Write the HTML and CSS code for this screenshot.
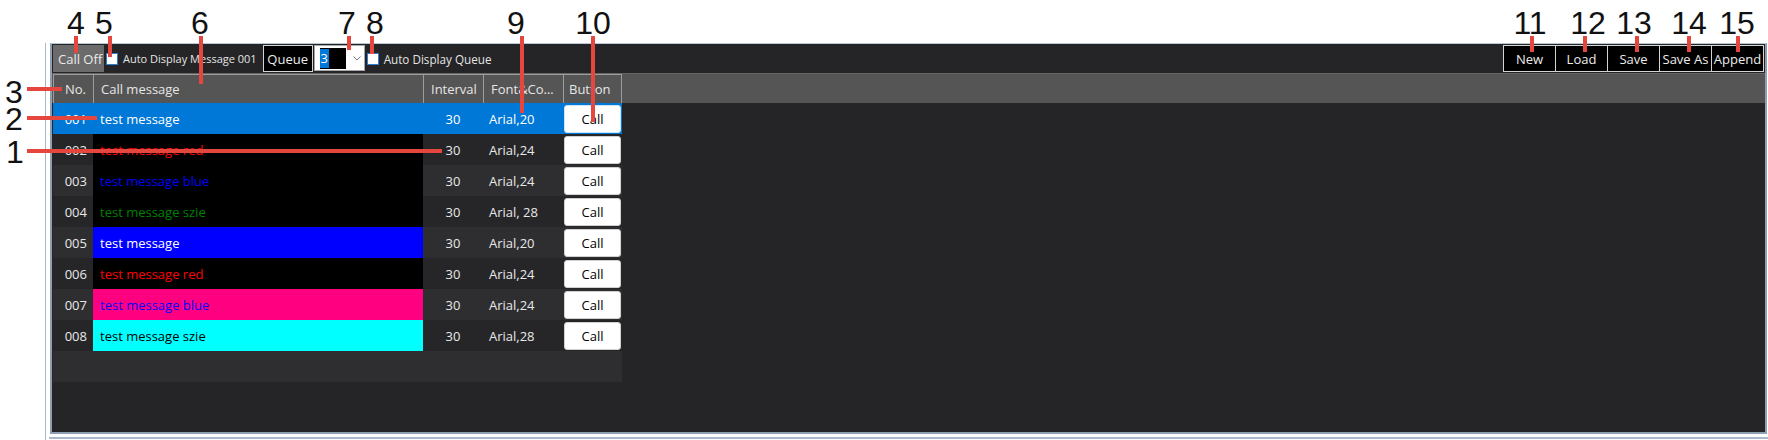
FILE: index.html
```html
<!DOCTYPE html>
<html>
<head>
<meta charset="utf-8">
<link rel="stylesheet" href="styles.css">
</head>
<body>
<div class="page">
  <div class="window">
    <div class="panel">
      <div class="toolbar">
        <div class="tb-left">
          <button class="btn-calloff">Call Off</button>
          <label class="chk chk-m"><span class="box"></span><span class="chk-text">Auto Display Message 001</span></label>
          <button class="btn-dark btn-queue">Queue</button>
          <div class="combo">
            <span class="combo-text"><span class="sel">3</span></span>
            <svg class="chev" width="8" height="5" viewBox="0 0 8 5"><path d="M0.5 0.5 L4 4 L7.5 0.5" fill="none" stroke="#777" stroke-width="1"/></svg>
          </div>
          <label class="chk chk-q"><span class="box"></span><span class="chk-text">Auto Display Queue</span></label>
        </div>
        <div class="tb-right">
          <button class="btn-dark btn-file">New</button>
          <button class="btn-dark btn-file">Load</button>
          <button class="btn-dark btn-file">Save</button>
          <button class="btn-dark btn-file">Save As</button>
          <button class="btn-dark btn-file">Append</button>
        </div>
      </div>
      <div class="header-bar">
        <div class="row head">
          <div class="hc c-no">No.</div>
          <div class="hc c-msg">Call message</div>
          <div class="hc c-int">Interval</div>
          <div class="hc c-font">Font&amp;Co…</div>
          <div class="hc c-btn hc-last">Button</div>
        </div>
      </div>
      <div class="tbody">
        <div class="row selected">
          <div class="c-no">001</div>
          <div class="c-msg">test message</div>
          <div class="c-int">30</div>
          <div class="c-font">Arial,20</div>
          <div class="c-btn"><button class="call">Call</button></div>
        </div>
        <div class="row even">
          <div class="c-no">002</div>
          <div class="c-msg m-black t-red">test message red</div>
          <div class="c-int">30</div>
          <div class="c-font">Arial,24</div>
          <div class="c-btn"><button class="call">Call</button></div>
        </div>
        <div class="row odd">
          <div class="c-no">003</div>
          <div class="c-msg m-black t-blue">test message blue</div>
          <div class="c-int">30</div>
          <div class="c-font">Arial,24</div>
          <div class="c-btn"><button class="call">Call</button></div>
        </div>
        <div class="row even">
          <div class="c-no">004</div>
          <div class="c-msg m-black t-green">test message szie</div>
          <div class="c-int">30</div>
          <div class="c-font">Arial, 28</div>
          <div class="c-btn"><button class="call">Call</button></div>
        </div>
        <div class="row odd">
          <div class="c-no">005</div>
          <div class="c-msg m-blue t-white">test message</div>
          <div class="c-int">30</div>
          <div class="c-font">Arial,20</div>
          <div class="c-btn"><button class="call">Call</button></div>
        </div>
        <div class="row even">
          <div class="c-no">006</div>
          <div class="c-msg m-black t-red">test message red</div>
          <div class="c-int">30</div>
          <div class="c-font">Arial,24</div>
          <div class="c-btn"><button class="call">Call</button></div>
        </div>
        <div class="row odd">
          <div class="c-no">007</div>
          <div class="c-msg m-pink t-blue">test message blue</div>
          <div class="c-int">30</div>
          <div class="c-font">Arial,24</div>
          <div class="c-btn"><button class="call">Call</button></div>
        </div>
        <div class="row even">
          <div class="c-no">008</div>
          <div class="c-msg m-cyan t-black">test message szie</div>
          <div class="c-int">30</div>
          <div class="c-font">Arial,28</div>
          <div class="c-btn"><button class="call">Call</button></div>
        </div>
        <div class="row odd empty"></div>
      </div>
    </div>
    <div class="bottom-line"></div>
  </div>

  <div class="ann-num n1">1</div>
  <div class="ann-num n2">2</div>
  <div class="ann-num n3">3</div>
  <div class="ann-num n4">4</div>
  <div class="ann-num n5">5</div>
  <div class="ann-num n6">6</div>
  <div class="ann-num n7">7</div>
  <div class="ann-num n8">8</div>
  <div class="ann-num n9">9</div>
  <div class="ann-num n10">10</div>
  <div class="ann-num n11">11</div>
  <div class="ann-num n12">12</div>
  <div class="ann-num n13">13</div>
  <div class="ann-num n14">14</div>
  <div class="ann-num n15">15</div>

  <div class="ann-line h l1"></div>
  <div class="ann-line h l2"></div>
  <div class="ann-line h l3"></div>
  <div class="ann-line v l4"></div>
  <div class="ann-line v l5"></div>
  <div class="ann-line v l6"></div>
  <div class="ann-line v l7"></div>
  <div class="ann-line v l8"></div>
  <div class="ann-line v l9"></div>
  <div class="ann-line v l10"></div>
  <div class="ann-line v l11"></div>
  <div class="ann-line v l12"></div>
  <div class="ann-line v l13"></div>
  <div class="ann-line v l14"></div>
  <div class="ann-line v l15"></div>
</div>
</body>
</html>
```

FILE: styles.css
```css
* { box-sizing: border-box; }
html, body { margin: 0; padding: 0; background: #ffffff; }
body { font-family: "Open Sans", "Noto Sans", sans-serif; font-size: 13px; }

.page {
  position: relative;
  width: 1768px;
  height: 440px;
  overflow: hidden;
  padding: 43px 0 0 45px;
}

.window {
  height: 397px;
  border-left: 1px solid #a9b7c8;
  padding-left: 4px;
}

.panel {
  height: 391px;
  margin-right: 1px;
  background: #252527;
  border-top: 1px solid #b9c6d5;
  border-left: 2px solid #8e9fb4;
  border-right: 2px solid #8e9fb4;
  border-bottom: 2px solid #8e9fb4;
  display: flex;
  flex-direction: column;
}

.bottom-line {
  margin-top: 3px;
  margin-left: -1px;
  height: 2px;
  background: #a9b8cb;
}

/* toolbar */
.toolbar {
  height: 30px;
  padding: 1px 1px 0 1px;
  display: flex;
  justify-content: space-between;
  align-items: flex-start;
  border-bottom: 1px solid #666;
}
.tb-left, .tb-right { display: flex; align-items: center; height: 27px; }

button {
  font-family: "Open Sans", "Noto Sans", sans-serif;
  font-size: 13px;
  margin: 0;
  padding: 0;
  cursor: default;
}

.btn-calloff {
  width: 51px;
  height: 27px;
  background: #6b6b6b;
  color: #ececec;
  border: none;
  text-align: left;
  padding-left: 5px;
  white-space: nowrap;
}

.chk {
  display: flex;
  align-items: center;
  color: #e4e4e4;
  white-space: nowrap;
  margin-left: 2px;
}
.chk-m { font-size: 11px; }
.chk-q { font-size: 11.7px; }
.chk .box {
  width: 12px;
  height: 12px;
  background: #fff;
  border: 1px solid #2c7fd0;
  margin-right: 5px;
}

.btn-dark {
  background: #000;
  color: #ececec;
  border: 1px solid #d4d4d4;
  height: 27px;
}
.btn-queue { width: 50px; margin-left: 6px; }

.combo {
  width: 51px;
  height: 26px;
  background: #fff;
  border: 1px solid #a8a8a8;
  margin-left: 1px;
  align-self: flex-start;
  display: flex;
  align-items: center;
  padding: 0 0 0 5px;
}
.combo-text {
  width: 26px;
  height: 21px;
  background: #000;
  display: flex;
  align-items: center;
}
.sel {
  background: #0078d7;
  color: #fff;
  width: 9px;
  height: 19px;
  line-height: 19px;
  font-size: 13px;
  text-align: center;
}
.chev { margin-left: 7px; }

.btn-file { width: 53px; margin-left: -1px; }
.tb-right .btn-file:first-child { margin-left: 0; }

/* table */
.header-bar {
  height: 29px;
  background: #555555;
  padding-left: 1px;
}
.row {
  display: flex;
  height: 31px;
  width: 569px;
}
.row > div {
  display: flex;
  align-items: center;
  white-space: nowrap;
  overflow: hidden;
  color: #e8e8e8;
}
.head { height: 29px; }
.head .hc {
  border-top: 1px solid #9c9c9c;
  border-left: 1px solid #9c9c9c;
  color: #e6e6e6;
}
.head .hc-last { border-right: 1px solid #9c9c9c; }

.c-no { width: 40px; justify-content: flex-end; padding-right: 6px; }
.c-msg { width: 330px; padding-left: 7px; }
.c-int { width: 60px; justify-content: center; }
.c-font { width: 80px; padding-left: 6px; }
.c-btn { width: 59px; padding-left: 1px; }
.head .c-no { padding-right: 7px; }
.head .c-int { justify-content: flex-start; padding-left: 7px; }
.head .c-font { padding-left: 7px; }
.head .c-btn { padding-left: 5px; }

.tbody { margin-left: 1px; }
.row.odd { background: #2e2e30; }
.row.even { background: #262628; }
.row.selected { background: #0078d7; }
.row.selected > div { color: #ffffff; }

.m-black { background: #000; }
.m-blue { background: #0000ff; }
.m-pink { background: #ff0080; }
.m-cyan { background: #00ffff; }
.row > .t-red { color: #ff0000; }
.row > .t-blue { color: #0000ff; }
.row > .t-green { color: #008000; }
.row > .t-white { color: #ffffff; }
.row > .t-black { color: #000000; }

.call {
  width: 57px;
  height: 28px;
  background: #ffffff;
  color: #000;
  border: 1px solid #d0d0d0;
  border-radius: 3px;
}
.selected .call { border-color: #cfe3f7; }

/* annotations */
.ann-num {
  position: absolute;
  width: 50px;
  text-align: center;
  font-family: "Liberation Sans", Arial, sans-serif;
  font-size: 32px;
  line-height: 26px;
  color: #111;
}
.n4 { left: 51px; top: 10px; }
.n5 { left: 79px; top: 10px; }
.n6 { left: 175px; top: 10px; }
.n7 { left: 322px; top: 10px; }
.n8 { left: 350px; top: 10px; }
.n9 { left: 491px; top: 10px; }
.n10 { left: 568px; top: 10px; }
.n11 { left: 1505px; top: 10px; }
.n12 { left: 1563px; top: 10px; }
.n13 { left: 1609px; top: 10px; }
.n14 { left: 1664px; top: 10px; }
.n15 { left: 1712px; top: 10px; }
.n3 { left: -11px; top: 79px; }
.n2 { left: -11px; top: 106px; }
.n1 { left: -10px; top: 139px; }

.ann-line { position: absolute; background: #e5463d; }
.ann-line.v { width: 4px; top: 36px; }
.ann-line.h { height: 4px; left: 27px; }
.l4 { left: 74px; height: 17px; }
.l5 { left: 108px; height: 21px; }
.l6 { left: 199px; height: 48px; }
.l7 { left: 347px; height: 14px; }
.l8 { left: 370px; height: 18px; }
.l9 { left: 520px; height: 77px; }
.l10 { left: 591px; height: 86px; }
.l11 { left: 1530px; height: 16px; }
.l12 { left: 1583px; height: 16px; }
.l13 { left: 1635px; height: 16px; }
.l14 { left: 1687px; height: 16px; }
.l15 { left: 1736px; height: 16px; }
.l3 { top: 87px; width: 35px; }
.l2 { top: 116px; width: 70px; }
.l1 { top: 149px; width: 415px; }
```
